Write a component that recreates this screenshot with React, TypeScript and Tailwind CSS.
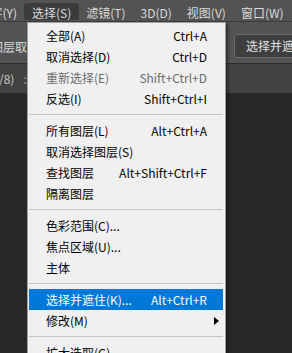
import { Fragment } from "react";

type Item =
  | { kind: "sep" }
  | { kind: "item"; label: string; shortcut?: string; disabled?: boolean; active?: boolean; submenu?: boolean };

const MENU_BAR = ["文字(Y)", "选择(S)", "滤镜(T)", "3D(D)", "视图(V)", "窗口(W)", "帮助(H)"];

const ITEMS: Item[] = [
  { kind: "item", label: "全部(A)", shortcut: "Ctrl+A" },
  { kind: "item", label: "取消选择(D)", shortcut: "Ctrl+D" },
  { kind: "item", label: "重新选择(E)", shortcut: "Shift+Ctrl+D", disabled: true },
  { kind: "item", label: "反选(I)", shortcut: "Shift+Ctrl+I" },
  { kind: "sep" },
  { kind: "item", label: "所有图层(L)", shortcut: "Alt+Ctrl+A" },
  { kind: "item", label: "取消选择图层(S)" },
  { kind: "item", label: "查找图层", shortcut: "Alt+Shift+Ctrl+F" },
  { kind: "item", label: "隔离图层" },
  { kind: "sep" },
  { kind: "item", label: "色彩范围(C)..." },
  { kind: "item", label: "焦点区域(U)..." },
  { kind: "item", label: "主体" },
  { kind: "sep" },
  { kind: "item", label: "选择并遮住(K)...", shortcut: "Alt+Ctrl+R", active: true },
  { kind: "item", label: "修改(M)", submenu: true },
  { kind: "sep" },
  { kind: "item", label: "扩大选取(G)" },
];

export default function App() {
  return (
    <div
      className="relative w-[292px] h-[353px] overflow-hidden bg-[#282828] text-[12px] leading-none"
      style={{ fontFamily: '"Noto Sans CJK SC", "Noto Sans", sans-serif' }}
    >
      {/* Menu bar */}
      <div className="h-[22px] flex items-start pt-[3px] bg-[#535353] border-b border-[#3c3c3c] whitespace-nowrap">
        <div className="flex items-center ml-[-29px]">
          {MENU_BAR.map((m) => (
            <div
              key={m}
              className={
                "h-[17px] flex items-center pt-[2px] px-[7.5px] rounded-[3px] text-[#dadada] " +
                (m === "选择(S)" ? "bg-[#3b3b3b]" : "")
              }
            >
              {m}
            </div>
          ))}
        </div>
      </div>

      {/* Options bar */}
      <div className="h-[42px] flex items-start pt-[12px] bg-[#535353] border-b border-[#2e2e2e] whitespace-nowrap">
        <div className="h-[24px] flex items-center w-full">
          <span className="ml-[-9px] pt-[2px] text-[#dadada]">图层取</span>
          <div className="ml-auto mr-[-22px] w-[80px] shrink-0 h-[24px] pl-[11px] flex items-center rounded-[3px] bg-[#3f3f3f] border border-[#6a6a6a] text-[#e2e2e2]">
            选择并遮住...
          </div>
        </div>
      </div>

      {/* Document tabs */}
      <div className="h-[29px] flex items-center gap-[9px] bg-[#424242] text-[#c8c8c8] whitespace-nowrap">
        <span className="ml-[-1px]">/8)</span>
        <span className="text-[#9a9a9a]">:</span>
      </div>

      {/* Dropdown */}
      <div className="absolute left-[27px] top-[22px] w-[199px] bg-[#f0f0f0] border border-[#a0a0a0] pl-[1px] pr-[2px] pt-[2px] shadow-[2px_2px_3px_rgba(0,0,0,0.45)]">
        {ITEMS.map((it, i) => (
          <Fragment key={i}>
            {it.kind === "sep" ? (
              <div className="h-[11px] flex items-center">
                <div className="w-full h-px bg-[#c4c4c4]" />
              </div>
            ) : (
              <div
                className={
                  "h-[21px] flex items-center pl-[17px] pr-[16px] whitespace-nowrap " +
                  (it.active ? "bg-[#0078d7] text-white" : it.disabled ? "text-[#6d6d6d]" : "text-black")
                }
              >
                <span>{it.label}</span>
                {it.shortcut && <span className="ml-auto">{it.shortcut}</span>}
                {it.submenu && (
                  <span className="ml-auto mr-[-12px] w-0 h-0 border-y-[4px] border-y-transparent border-l-[5px] border-l-black" />
                )}
              </div>
            )}
          </Fragment>
        ))}
      </div>
    </div>
  );
}
